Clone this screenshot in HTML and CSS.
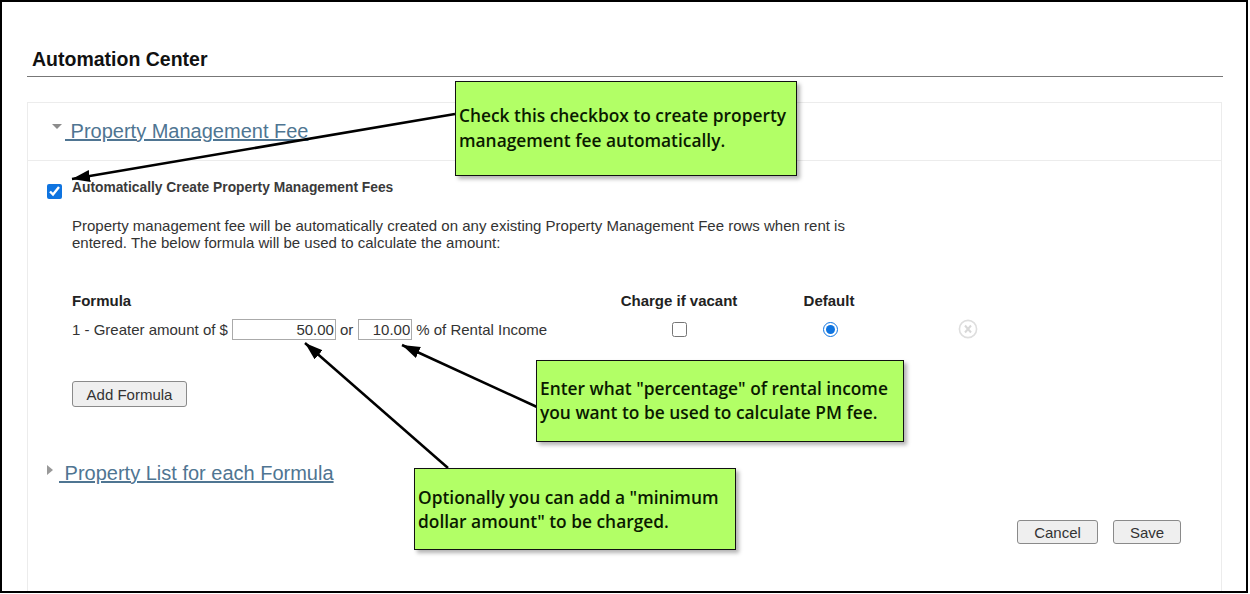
FILE: index.html
```html
<!DOCTYPE html>
<html lang="en">
<head>
  <meta charset="UTF-8">
  <title>Automation Center</title>
  <link rel="stylesheet" href="styles.css">
</head>
<body>
  <div class="frame">
    <h1 class="page-title">Automation Center</h1>

    <div class="panel">
      <div class="panel-head">
        <span class="caret-down"></span>
        <a class="section-link" href="#">&nbsp;Property Management Fee</a>
      </div>

      <div class="panel-body">
        <div class="auto-row">
          <input class="auto-check" type="checkbox" checked>
          <b class="auto-label">Automatically Create Property Management Fees</b>
        </div>
        <p class="auto-text">Property management fee will be automatically created on any existing Property Management Fee rows when rent is entered. The below formula will be used to calculate the amount:</p>

        <div class="formula-grid">
          <b>Formula</b>
          <b class="center">Charge if vacant</b>
          <b class="center">Default</b>
          <span></span>

          <div class="formula-line">
            1 - Greater amount of $
            <input class="num num-wide" type="text" value="50.00">
            or
            <input class="num num-small" type="text" value="10.00">
            % of Rental Income
          </div>
          <div class="center"><input class="vacant-check" type="checkbox"></div>
          <div class="center"><input class="default-radio" type="radio" checked></div>
          <div class="remove-cell">
            <svg width="20" height="20" viewBox="0 0 20 20">
              <circle cx="10" cy="10" r="8.6" fill="#fff" stroke="#dedede" stroke-width="1.6"/>
              <path d="M7 6.5l6 7M13 6.5l-6 7" stroke="#d8d8d8" stroke-width="2" fill="none"/>
            </svg>
          </div>
        </div>

        <button class="btn btn-add">Add Formula</button>

        <div class="list-head">
          <span class="caret-right"></span>
          <a class="section-link" href="#">&nbsp;Property List for each Formula</a>
        </div>

        <div class="actions">
          <button class="btn btn-cancel">Cancel</button>
          <button class="btn btn-save">Save</button>
        </div>
      </div>
    </div>

    <!-- annotations on top of the page -->
    <svg class="arrows" width="1248" height="593" viewBox="0 0 1248 593">
      <defs>
        <marker id="head" markerUnits="userSpaceOnUse" markerWidth="20" markerHeight="14" refX="18" refY="6" orient="auto">
          <path d="M0 0L18 6L0 12z" fill="#000"/>
        </marker>
      </defs>
      <path d="M455 114L72 179" stroke="#000" stroke-width="2.5" marker-end="url(#head)"/>
      <path d="M537 407L402 345" stroke="#000" stroke-width="2.5" marker-end="url(#head)"/>
      <path d="M448 468L305 343" stroke="#000" stroke-width="2.5" marker-end="url(#head)"/>
    </svg>

    <div class="note note-check">Check this checkbox to create property<br>management fee automatically.</div>
    <div class="note note-percent">Enter what "percentage" of rental income<br>you want to be used to calculate PM fee.</div>
    <div class="note note-min">Optionally you can add a "minimum<br>dollar amount" to be charged.</div>
  </div>
</body>
</html>
```

FILE: styles.css
```css
body {
  margin: 0;
  background: #fff;
  font-family: "Liberation Sans", Arial, sans-serif;
  color: #333;
}

.frame {
  position: relative;
  box-sizing: border-box;
  width: 1248px;
  height: 593px;
  border: 2px solid #000;
  overflow: hidden;
  background: #fff;
}

.page-title {
  margin: 0 23px 0 25px;
  padding: 45px 0 5px 5px;
  font-size: 19.5px;
  line-height: 24px;
  font-weight: bold;
  color: #111;
  border-bottom: 1px solid #777;
}

.panel {
  margin: 25px 24px 0 25px;
  height: 600px;
  border: 1px solid #ececec;
}

.panel-head {
  display: flex;
  align-items: center;
  box-sizing: border-box;
  height: 58px;
  padding: 0 0 2px 24px;
  border-bottom: 1px solid #ececec;
}

.section-link {
  font-size: 20px;
  line-height: 24px;
  color: #4f7592;
  text-decoration: underline;
}

.caret-down {
  width: 0;
  height: 0;
  margin: 0 3px 8px 0;
  border-left: 5px solid transparent;
  border-right: 5px solid transparent;
  border-top: 5px solid #8c8c8c;
}

.caret-right {
  width: 0;
  height: 0;
  margin: 0 6px 6px 0;
  border-top: 5px solid transparent;
  border-bottom: 5px solid transparent;
  border-left: 6px solid #999;
}

.panel-body {
  padding: 19px 0 0 19px;
}

.auto-row {
  display: flex;
  align-items: flex-start;
  gap: 10px;
}

.auto-check {
  width: 15px;
  height: 15px;
  margin: 4px 0 0;
  accent-color: #0f74e0;
}

.auto-label {
  font-size: 13.8px;
  line-height: 15px;
  color: #3a3a3a;
}

.auto-text {
  width: 800px;
  margin: 18px 0 0 25px;
  font-size: 15px;
  line-height: 17px;
}

.formula-grid {
  display: grid;
  grid-template-columns: 548px 118px 182px 1fr;
  row-gap: 10px;
  margin: 41px 0 0 25px;
  font-size: 15px;
  line-height: 17px;
}

.formula-grid b {
  color: #222;
}

.center {
  display: flex;
  justify-content: center;
  white-space: nowrap;
}

.formula-line {
  display: flex;
  align-items: center;
  gap: 4px;
  height: 21px;
}

.num {
  box-sizing: border-box;
  height: 21px;
  padding: 0 1px;
  border: 1px solid #aaa;
  font: 15px "Liberation Sans", Arial, sans-serif;
  color: #333;
  text-align: right;
}

.num-wide {
  width: 104px;
}

.num-small {
  width: 54px;
  margin-left: 1px;
}

.vacant-check {
  width: 15px;
  height: 15px;
  margin: 3px 0 0;
}

.default-radio {
  width: 15px;
  height: 15px;
  margin: 3px 0 0 3px;
  accent-color: #0f74e0;
}

.remove-cell {
  display: flex;
  padding-left: 38px;
}

.btn {
  box-sizing: border-box;
  padding: 0;
  border: 1px solid #8a8a8a;
  border-radius: 3px;
  background: #efefef;
  font: 15px "Liberation Sans", Arial, sans-serif;
  color: #333;
}

.btn-add {
  display: block;
  width: 115px;
  height: 26px;
  margin: 41px 0 0 25px;
}

.list-head {
  display: flex;
  align-items: center;
  height: 24px;
  margin-top: 54px;
}

.actions {
  display: flex;
  justify-content: flex-end;
  gap: 15px;
  margin: 35px 40px 0 0;
}

.btn-cancel {
  width: 81px;
  height: 24px;
}

.btn-save {
  width: 68px;
  height: 24px;
}

.arrows {
  position: absolute;
  left: -2px;
  top: -2px;
}

.note {
  position: absolute;
  box-sizing: border-box;
  display: flex;
  align-items: center;
  padding: 0 3px;
  background: #b2ff66;
  border: 1px solid #111;
  box-shadow: 3px 3px 4px rgba(0, 0, 0, 0.3);
  font-family: "Open Sans", sans-serif;
  font-size: 17.35px;
  font-weight: 600;
  line-height: 24px;
  color: #0a1a00;
  white-space: nowrap;
}

.note-check {
  left: 453px;
  top: 79px;
  width: 342px;
  height: 95px;
  padding-bottom: 2px;
  line-height: 24.5px;
}

.note-percent {
  left: 534px;
  top: 358px;
  width: 368px;
  height: 82px;
  padding-bottom: 2px;
}

.note-min {
  left: 412px;
  top: 466px;
  width: 322px;
  height: 82px;
}
```
